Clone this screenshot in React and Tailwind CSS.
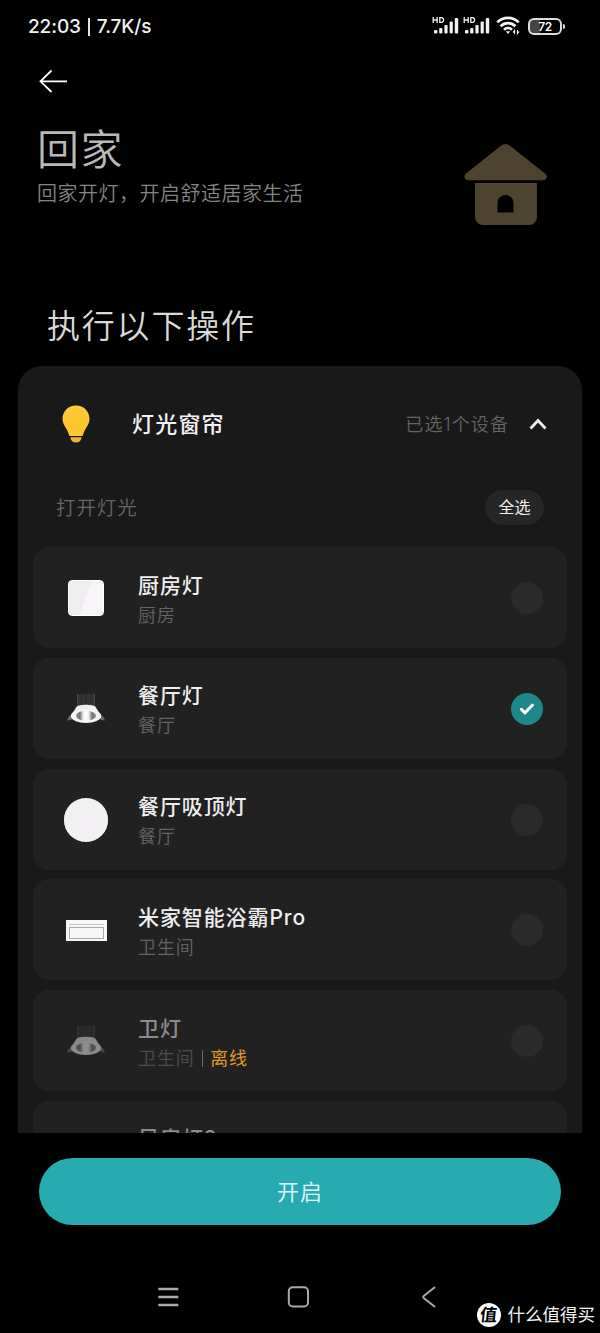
const FONT = "font-['Inter','Noto_Sans_CJK_SC',sans-serif]";

function Signal() {
  return (
    <svg width="27" height="20" viewBox="0 0 27 20" fill="#f2f2f2">
      <g fill="none" stroke="#f2f2f2" strokeWidth="1.3">
        <path d="M1.2 1v6M5.2 1v6M1.2 4h4M7.8 1.6v4.8h1.4a2.4 2.4 0 0 0 0-4.8z" />
      </g>
      <rect x="2" y="14" width="3.400" height="3.5" rx="1" />
      <rect x="7.2" y="12" width="3.200" height="5.5" rx="1" />
      <rect x="12.4" y="9" width="3.200" height="8.500" rx="1" />
      <rect x="17.6" y="5.500" width="3.200" height="12" rx="1" />
      <rect x="22.800" y="2" width="3.400" height="15.500" rx="1" />
    </svg>
  );
}

function Wifi() {
  return (
    <svg width="25" height="20" viewBox="0 0 25 20" fill="none" stroke="#f2f2f2" strokeWidth="2.700">
      <path d="M1.300 6.400a15 15 0 0 1 21.400 0" />
      <path d="M4.600 10.300a10.400 10.400 0 0 1 14.800 0" />
      <path d="M8 13.700a5.800 5.800 0 0 1 8 0" />
      <path d="M9.800 15.200h4.400L12 18z" fill="#f2f2f2" stroke="none" />
      <path d="M18.500 18v-3.500l-1.500 2M21.500 14v3.500l1.600-2" strokeWidth="1.200" />
    </svg>
  );
}

function Battery() {
  return (
    <div className="flex items-center gap-[1px]">
      <div className="flex h-[17px] w-[34px] items-center justify-center rounded-[6px] border-[2px] border-[#dcdcdc] bg-[linear-gradient(90deg,#444_0_34%,#000_34%)] text-[12px] font-semibold leading-[13px] tracking-[-0.4px] text-white">
        72
      </div>
      <div className="h-[5px] w-[2px] rounded-r bg-[#e4e4e4]" />
    </div>
  );
}

function House() {
  return (
    <svg width="84" height="82" viewBox="0 0 84 82" fill="#4e432f">
      <path d="M37.300 1.600a7 7 0 0 1 8.400 0L81 29.500c3.200 2.800 1.700 6.800-2.500 6.800h-74C.3 36.300-.8 32.200 2 29.500z" />
      <path
        fillRule="evenodd"
        d="M11 39h62v34a8 8 0 0 1-8 8H19a8 8 0 0 1-8-8zM33.500 68.500h16V59a8 8 0 0 0-16 0z"
      />
    </svg>
  );
}

function Bulb() {
  return (
    <svg width="28" height="38" viewBox="0 0 28 38">
      <defs>
        <linearGradient id="bulb" x1="0" y1="0" x2="0.400" y2="1">
          <stop offset="0" stopColor="#ffca36" />
          <stop offset="1" stopColor="#fdc62f" />
        </linearGradient>
      </defs>
      <path
        fill="url(#bulb)"
        d="M14 .5C6 .5.500 6.500.500 14c0 4 1.900 6.500 4 10 1.400 2.500 1.900 4 2.400 5.800.200.800.7 1.200 1.600 1.200h11c.9 0 1.400-.4 1.600-1.200.5-1.800 1-3.300 2.400-5.800 2.100-3.500 4-6 4-10C27.500 6.500 22 .5 14 .5z"
      />
      <path fill="#f3ad3e" d="M8.300 32.200h11.400c-.5 3.300-2.500 5.300-5.700 5.300s-5.200-2-5.700-5.300z" />
    </svg>
  );
}

function SquarePanel() {
  return (
    <div className="h-9 w-9 rounded-[4px] border border-white bg-[linear-gradient(110deg,#efedef_0_48%,#f7f5f7_50%)]" />
  );
}

function Downlight() {
  return (
    <svg width="40" height="32" viewBox="0 0 40 32">
      <defs>
        <linearGradient id="sink" x1="0" x2="1">
          <stop offset="0" stopColor="#4c4b4c" />
          <stop offset="0.100" stopColor="#343334" />
          <stop offset="0.900" stopColor="#343334" />
          <stop offset="1" stopColor="#4c4b4c" />
        </linearGradient>
        <linearGradient id="glow" x1="0" x2="1">
          <stop offset="0" stopColor="#8a8a8a" />
          <stop offset="0.200" stopColor="#777" />
          <stop offset="0.360" stopColor="#eee" />
          <stop offset="0.500" stopColor="#fff" />
          <stop offset="0.640" stopColor="#eee" />
          <stop offset="0.800" stopColor="#777" />
          <stop offset="1" stopColor="#8a8a8a" />
        </linearGradient>
      </defs>
      <path fill="#6a6a6a" d="M6 21 2.500 24 1 27.500l3.500-.5L8 25zM34 21l3.500 3 1.500 3.500-3.500-.5L32 25z" />
      <path fill="url(#sink)" d="M11 1h18v14H11z" />
      <path stroke="#252425" strokeWidth="0.700" d="M15 1v10M20 1v10M25 1v10" />
      <path fill="#efefef" d="M5 24C6.500 20 8.500 17 10.500 13.800 13 11 27 11 29.500 13.800 31.500 17 33.500 20 35 24z" />
      <ellipse cx="20" cy="23" rx="15.200" ry="7" fill="#f4f4f4" />
      <ellipse cx="20" cy="22.700" rx="10" ry="5" fill="url(#glow)" />
    </svg>
  );
}

function RoundPanel() {
  return <div className="h-11 w-11 rounded-full bg-[#f3f1f3] shadow-[inset_0_0_2px_#fff]" />;
}

function Heater() {
  return (
    <div className="h-[21px] w-[41px] bg-[#f8f7f8] px-[3px] pt-[4px]">
      <div className="h-[2px] border-t border-[#c9c7c9]" />
      <div className="mt-[1px] h-[12px] border border-[#aaa8aa]" />
    </div>
  );
}

function Toggle({ checked }) {
  if (!checked) return <div className="h-8 w-8 rounded-full bg-[#2b2a2a]" />;
  return (
    <div className="flex h-8 w-8 items-center justify-center rounded-full bg-[#1d878c]">
      <svg width="16" height="14" viewBox="0 0 16 14" fill="none" stroke="#fff" strokeWidth="3" strokeLinecap="round" strokeLinejoin="round">
        <path d="M2.300 7.300 5.900 10.900 13.500 3" />
      </svg>
    </div>
  );
}

const devices = [
  { name: "厨房灯", room: "厨房", icon: <SquarePanel /> },
  { name: "餐厅灯", room: "餐厅", icon: <Downlight />, checked: true },
  { name: "餐厅吸顶灯", room: "餐厅", icon: <RoundPanel /> },
  { name: "米家智能浴霸Pro", room: "卫生间", icon: <Heater /> },
  { name: "卫灯", room: "卫生间", icon: <Downlight />, offline: true },
  { name: "风房灯2", room: "", offline: true },
];

function Device({ name, room, icon, checked, offline }) {
  return (
    <div className="flex h-[101px] shrink-0 items-center rounded-[16px] bg-[#222122] pr-[24px] pt-px">
      <div className={`flex w-[105px] shrink-0 justify-center pl-px ${offline ? "opacity-50" : ""}`}>{icon}</div>
      <div className="flex-1 whitespace-nowrap pt-[5px]">
        <div className={`text-[21px] font-medium leading-[30px] tracking-[0.9px] ${offline ? "text-[#8d8c8d]" : "text-[#efeeef]"}`}>
          {name}
        </div>
        <div className="flex h-[30px] items-center text-[18px] font-[350] leading-[30px] tracking-[0.9px]">
          <span className={offline ? "text-[#4d4c4d]" : "text-[#656465]"}>{room}</span>
          {offline && room && (
            <>
              <span className="ml-[7px] mr-[7px] h-[17px] w-[1.5px] bg-[#6d6c6d]" />
              <span className="font-normal text-[#e0962a]">离线</span>
            </>
          )}
        </div>
      </div>
      <Toggle checked={checked} />
    </div>
  );
}

export default function App() {
  return (
    <div className={`flex h-[1333px] w-[600px] flex-col overflow-hidden bg-black text-white ${FONT}`}>
      <div className="flex h-[52px] shrink-0 items-center justify-between pl-[28px] pr-[35px]">
        <div className="flex items-center pt-[2px] text-[19px] font-medium tracking-[-0.1px] text-[#f2f2f2]">
          <span>22:03</span>
          <span className="mx-[7px] h-[18px] w-[2px] bg-[#e4e4e4]" />
          <span>7.7K/s</span>
        </div>
        <div className="flex items-center">
          <Signal />
          <div className="ml-[4px]"><Signal /></div>
          <div className="ml-[6px]"><Wifi /></div>
          <div className="ml-[7px]"><Battery /></div>
        </div>
      </div>

      <div className="h-[66px] shrink-0 pl-[39px] pt-[17px]">
        <svg width="29" height="24" viewBox="0 0 29 24" fill="none" stroke="#fff" strokeWidth="1.800">
          <path d="M28 12.300H1.500M12.500 1.500 1.500 12.300 12.500 23" />
        </svg>
      </div>

      <div className="flex h-[180px] shrink-0 justify-between pl-[37px] pr-[52px]">
        <div className="pt-[2px]">
          <h1 className="text-[42px] font-[350] leading-[60px] tracking-[1.5px] text-[#b9b9b9]">回家</h1>
          <p className="-mt-px text-[20px] font-[350] leading-[30px] tracking-[0.5px] text-[#858585]">回家开灯，开启舒适居家生活</p>
        </div>
        <div className="pt-[26px]"><House /></div>
      </div>

      <h2 className="h-[68px] shrink-0 pl-[47px] pt-px text-[33px] font-[350] leading-[54px] tracking-[1.8px] text-[#dadada]">执行以下操作</h2>

      <div className="mx-[18px] flex h-[767px] shrink-0 flex-col overflow-hidden rounded-t-[24px] bg-[#1a191a] px-[15px]">
        <div className="flex h-[116px] shrink-0 items-center pl-[29px] pr-[20px]">
          <Bulb />
          <span className="ml-[42px] flex-1 pt-px text-[22px] font-medium tracking-[1.2px] text-[#f2f2f2]">灯光窗帘</span>
          <span className="pt-px text-[18px] font-[350] tracking-[1.1px] text-[#666566]">已选1个设备</span>
          <svg className="ml-[20px]" width="18" height="14" viewBox="0 0 18 14" fill="none" stroke="#eee" strokeWidth="2.800">
            <path d="M1.500 11.500 9 3.500l7.500 8" />
          </svg>
        </div>
        <div className="flex h-[50px] shrink-0 items-center justify-between pl-[23px] pr-[23px]">
          <span className="pt-[4px] text-[19.500px] font-[350] tracking-[0.9px] text-[#666566]">打开灯光</span>
          <span className="flex h-[35px] w-[59px] items-center justify-center rounded-full bg-[#272627] text-[16px] text-[#efefef]">全选</span>
        </div>
        <div className="mt-[15px] flex flex-col gap-[9.800px]">
          {devices.map((device) => (
            <Device key={device.name} {...device} />
          ))}
        </div>
      </div>

      <div className="shrink-0 px-[39px] pt-[25px]">
        <button className="flex h-[67px] w-full items-center justify-center rounded-full bg-[#27aab0] pt-px text-[22px] font-[350] tracking-[1px] text-[#e0fbfc]">开启</button>
      </div>

      <div className="relative flex h-[108px] shrink-0 pt-[61px]">
        <svg className="ml-[157px]" width="23" height="23" viewBox="0 0 23 23" stroke="#aaa" strokeWidth="2.400" strokeLinecap="round">
          <path d="M2.300 3h18M2.300 11h18M2.300 19h18" />
        </svg>
        <svg className="ml-[107px]" width="23" height="23" viewBox="0 0 23 23" fill="none" stroke="#aaa" strokeWidth="2">
          <rect x="1.800" y="1.300" width="19.200" height="19.200" rx="4" />
        </svg>
        <svg className="ml-[111px]" width="16" height="23" viewBox="0 0 16 23" fill="none" stroke="#aaa" strokeWidth="2" strokeLinecap="round" strokeLinejoin="round">
          <path d="M13.500 1.500 3 9.700q-1.500 1.300 0 2.600L13.500 20.500" />
        </svg>
        <div className="absolute bottom-[6px] right-[5px] flex items-center gap-[7px]">
          <span className="flex h-6 w-6 items-center justify-center rounded-full bg-white text-[17px] font-bold leading-none text-black">
            <span className="-skew-x-6">值</span>
          </span>
          <span className="text-[17.500px] font-normal leading-6 text-[#f4f4f4]">什么值得买</span>
        </div>
      </div>
    </div>
  );
}
